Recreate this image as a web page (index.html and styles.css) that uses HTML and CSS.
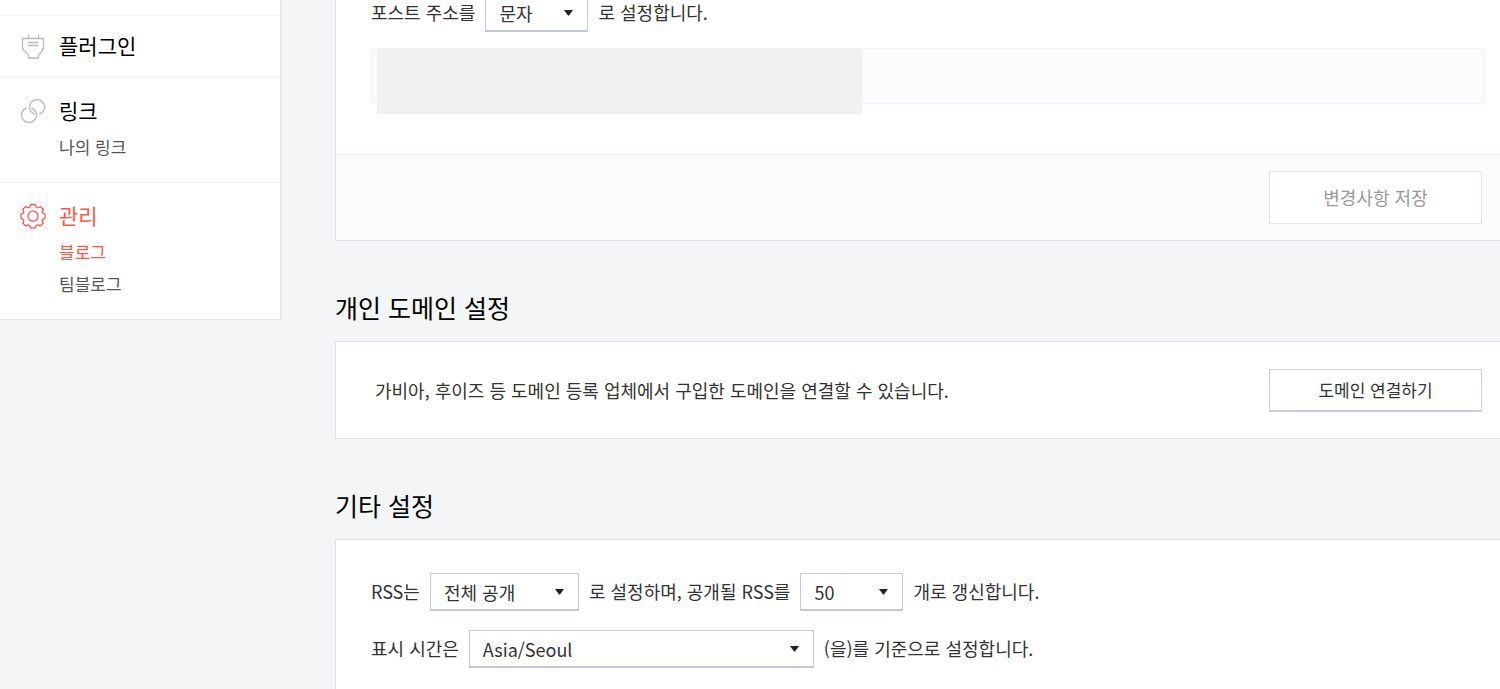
FILE: index.html
```html
<!DOCTYPE html>
<html lang="ko">
<head>
    <meta charset="UTF-8">
    <meta name="viewport" content="width=device-width, initial-scale=1.0">
    <title>블로그 관리</title>
    <link rel="stylesheet" href="styles.css">
</head>
<body>
    <div class="wrap">
        <nav class="sidebar">
            <div class="menu">
                <svg class="icon" viewBox="0 0 26 26">
                    <path d="M8.500 1.500v4M18.500 1.500v4M2.500 5.500h21V13c0 4-2 6.500-5 8.500v3.500h-10v-3.500c-3.500-2-6-4.500-6-8.500zM8 9.500h10.500M8 12.500h10.500"/>
                </svg>
                <a href="#plugin" class="menu-title">플러그인</a>
            </div>
            <div class="menu">
                <svg class="icon" viewBox="0 0 26 26">
                    <path d="M19.300 16.200A7.500 7.500 0 1 0 14.800 16.200"/>
                    <path d="M6.700 9.900A7.500 7.500 0 1 0 11.300 9.900"/>
                </svg>
                <a href="#link" class="menu-title">링크</a>
                <ul>
                    <li><a href="#mylink">나의 링크</a></li>
                </ul>
            </div>
            <div class="menu active">
                <svg class="icon" viewBox="0 0 26 26">
                    <path d="M10.800 1.500h4.400q.3 2.700 2.200 3.100q1.300.3 3-1l2.800 2.800q-1.300 1.700-.9 3q.4 1.500 2.700 1.800v4.100q-2.300.3-2.700 1.900q-.4 1.500.9 3l-2.900 2.800q-1.700-1.300-3-.9q-1.700.4-2.100 2.700h-4.400q-.3-2.300-2.100-2.700q-1.300-.4-3 .9l-2.900-2.800q1.300-1.500.9-3q-.4-1.600-2.700-1.900v-4.100q2.300-.3 2.700-1.800q.4-1.300-.9-3l2.900-2.800q1.700 1.300 3 1q1.800-.4 2.100-3.100z"/>
                    <circle cx="13" cy="13.200" r="5"/>
                </svg>
                <a href="#manage" class="menu-title">관리</a>
                <ul>
                    <li><a href="#blog" class="current">블로그</a></li>
                    <li><a href="#team">팀블로그</a></li>
                </ul>
            </div>
        </nav>
        <main class="content">
            <section class="panel panel-post">
                <div class="row">
                    <label for="post-url">포스트 주소를</label>
                    <select id="post-url" class="small">
                        <option>문자</option>
                        <option>숫자</option>
                    </select>
                    <span>로 설정합니다.</span>
                </div>
                <div class="address"><div class="address-cover"></div></div>
                <div class="panel-footer">
                    <button type="button" class="btn btn-save" disabled>변경사항 저장</button>
                </div>
            </section>

            <h2>개인 도메인 설정</h2>
            <section class="panel panel-domain">
                <p>가비아, 후이즈 등 도메인 등록 업체에서 구입한 도메인을 연결할 수 있습니다.</p>
                <button type="button" class="btn">도메인 연결하기</button>
            </section>

            <h2>기타 설정</h2>
            <section class="panel panel-etc">
                <div class="row">
                    <label for="rss-open">RSS는</label>
                    <select id="rss-open" class="medium">
                        <option>전체 공개</option>
                        <option>부분 공개</option>
                    </select>
                    <label for="rss-count">로 설정하며, 공개될 RSS를</label>
                    <select id="rss-count" class="small">
                        <option>50</option>
                        <option>40</option>
                    </select>
                    <span>개로 갱신합니다.</span>
                </div>
                <div class="row">
                    <label for="timezone">표시 시간은</label>
                    <select id="timezone" class="large">
                        <option>Asia/Seoul</option>
                    </select>
                    <span>(을)를 기준으로 설정합니다.</span>
                </div>
            </section>
        </main>
    </div>
</body>
</html>
```

FILE: styles.css
```css
* {
    box-sizing: border-box;
}
body {
    margin: 0;
    font-family: "Noto Sans CJK KR", sans-serif;
    font-size: 18px;
    line-height: 26px;
    color: #333;
    background-color: #f3f5f7;
    overflow: hidden;
}
a {
    color: inherit;
    text-decoration: none;
}
.wrap {
    display: flex;
    align-items: flex-start;
    min-height: 100vh;
}

/* sidebar */
.sidebar {
    flex: 0 0 282px;
    padding-top: 15px;
    background-color: #fff;
    border-right: 2px solid #e4e8f0;
    border-bottom: 1px solid #dfe3eb;
}
.menu {
    display: grid;
    grid-template-columns: 26px 1fr;
    column-gap: 13px;
    align-items: center;
    padding: 15px 20px 18px;
    border-top: 1px solid #f0f2f4;
}
.menu + .menu {
    padding: 18px 20px 19px;
}
.icon {
    width: 26px;
    height: 26px;
    margin-top: 2px;
    fill: none;
    stroke: #bbb;
    stroke-width: 1.3;
}
.menu-title {
    font-size: 21px;
    line-height: 28px;
    color: #000;
}
.menu ul {
    grid-column: 2;
    margin: 7px 0 0;
    padding: 0;
    list-style: none;
    font-size: 17px;
    line-height: 32px;
    color: #555;
}
.active .icon {
    stroke: #ff5544;
}
.active .menu-title,
.current {
    color: #ff5544;
}

/* content */
.content {
    flex: 1;
    align-self: stretch;
    display: flex;
    flex-direction: column;
    min-width: 0;
    margin-left: 53px;
}
h2 {
    margin: 49px 0 17px;
    font-size: 25px;
    font-weight: 400;
    line-height: 34px;
    color: #000;
}
.panel {
    background-color: #fff;
    border: 1px solid #dfe4ec;
    border-right: 0;
}
.row {
    display: flex;
    align-items: center;
    gap: 10px;
    padding-left: 35px;
}
.row + .row {
    margin-top: 19px;
}
.row label,
.row span,
.panel-domain p {
    margin: 0;
    padding-bottom: 2px;
}

/* the page is scrolled, the first row is cut by the window */
.panel-post {
    margin-top: -7px;
}
.address {
    position: relative;
    height: 56px;
    margin: 16px 15px 50px 35px;
    background-color: #fafbfd;
    border: 1px solid #f0f2f4;
}
.address-cover {
    position: absolute;
    top: -1px;
    left: 5px;
    width: 485px;
    height: 66px;
    background-color: #f1f1f1;
}
.panel-footer {
    display: flex;
    justify-content: flex-end;
    padding: 16px 18px;
    background-color: #fafbfb;
    border-top: 1px solid #eff1f3;
}
.panel-domain {
    display: flex;
    align-items: center;
    justify-content: space-between;
    padding: 27px 18px 26px 39px;
}
.panel-etc {
    flex: 1;
    padding-top: 33px;
    border-bottom: 0;
}

/* controls */
.btn {
    width: 213px;
    height: 43px;
    padding: 0 0 2px;
    font-family: inherit;
    font-size: 17px;
    color: #333;
    background-color: #fff;
    border: 1px solid #c9cfdc;
    border-bottom-width: 2px;
}
.btn-save {
    height: 53px;
    font-size: 18px;
    color: #999;
    border: 1px solid #e2e5ee;
}
select {
    height: 38px;
    padding: 0 13px;
    font-family: inherit;
    font-size: 18px;
    color: #333;
    border: 1px solid #c3c9d6;
    border-bottom-width: 2px;
    border-radius: 0;
    appearance: none;
    background: #fff url("data:image/svg+xml,%3Csvg xmlns='http://www.w3.org/2000/svg' width='9' height='6'%3E%3Cpath d='M0 0h9L5 5.500H4z' fill='%23222'/%3E%3C/svg%3E") no-repeat right 14px center;
}
.small {
    width: 103px;
}
.medium {
    width: 149px;
}
.large {
    width: 345px;
}
```
